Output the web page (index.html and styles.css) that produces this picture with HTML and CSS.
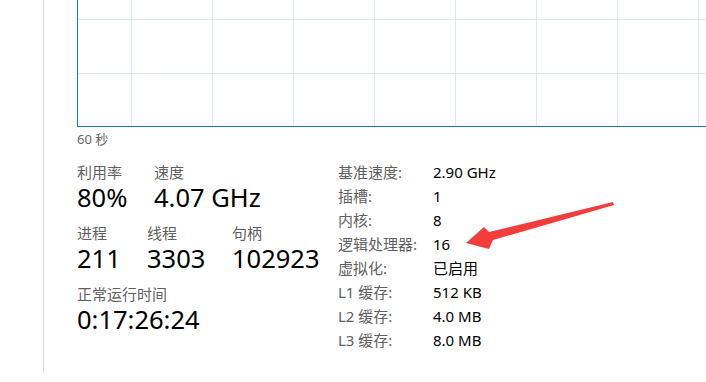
FILE: index.html
```html
<!DOCTYPE html>
<html lang="zh-CN">
<head>
  <meta charset="UTF-8" />
  <meta name="viewport" content="width=device-width, initial-scale=1" />
  <title>CPU 性能</title>
  <link rel="stylesheet" href="styles.css">
</head>
<body>
  <div class="panel">
    <div class="chart"></div>
    <div class="caption">60 秒</div>

    <div class="stats">
      <div class="live">
        <div class="row">
          <div class="cell w77">
            <div class="label">利用率</div>
            <div class="value">80%</div>
          </div>
          <div class="cell">
            <div class="label">速度</div>
            <div class="value">4.07 GHz</div>
          </div>
        </div>
        <div class="row">
          <div class="cell w70">
            <div class="label">进程</div>
            <div class="value">211</div>
          </div>
          <div class="cell w85">
            <div class="label">线程</div>
            <div class="value">3303</div>
          </div>
          <div class="cell">
            <div class="label">句柄</div>
            <div class="value">102923</div>
          </div>
        </div>
        <div class="row">
          <div class="cell">
            <div class="label">正常运行时间</div>
            <div class="value">0:17:26:24</div>
          </div>
        </div>
      </div>

      <dl class="specs">
        <dt>基准速度:</dt><dd>2.90 GHz</dd>
        <dt>插槽:</dt><dd>1</dd>
        <dt>内核:</dt><dd>8</dd>
        <dt>逻辑处理器:</dt><dd>16</dd>
        <dt>虚拟化:</dt><dd>已启用</dd>
        <dt>L1 缓存:</dt><dd>512 KB</dd>
        <dt>L2 缓存:</dt><dd>4.0 MB</dd>
        <dt>L3 缓存:</dt><dd>8.0 MB</dd>
      </dl>
    </div>
  </div>

  <svg class="arrow" width="160" height="56" viewBox="0 0 160 56">
    <polygon points="6,45 24,29 29,34 153,4 154,7 33,42 29,51" fill="#f23d3d" />
  </svg>
</body>
</html>
```

FILE: styles.css
```css
body {
  margin: 0;
  background: #fff;
  font-family: "Noto Sans", "Noto Sans CJK SC", sans-serif;
  color: #000;
  overflow: hidden;
}
.panel {
  margin-left: 43px;
  height: 373px;
  border-left: 1px solid #d9d9d9;
  padding-left: 33px;
}
.chart {
  height: 126px;
  border-left: 1px solid #1b7ab8;
  border-bottom: 1px solid #1b7ab8;
  background-image:
    linear-gradient(to right, #d9e8f2 0 1px, transparent 1px),
    linear-gradient(to bottom, #d9e8f2 0 1px, transparent 1px);
  background-size: 81px 100%, 100% 54px;
  background-position: 53px 0, 0 19px;
}
.caption {
  margin-top: 4px;
  font-size: 13px;
  line-height: 16px;
  color: #666;
}
.stats {
  display: grid;
  grid-template-columns: 261px 1fr;
  margin-top: 15px;
}
.row {
  display: flex;
  margin-bottom: 11px;
}
.cell.w77 { width: 77px; }
.cell.w70 { width: 70px; }
.cell.w85 { width: 85px; }
.label {
  font-size: 15px;
  line-height: 20px;
  color: #5f5f5f;
}
.value {
  font-size: 25.5px;
  line-height: 30px;
  color: #000;
}
.specs {
  display: grid;
  grid-template-columns: 95px 1fr;
  margin: -2px 0 0;
  font-size: 15px;
  line-height: 24px;
}
.specs dt {
  color: #5f5f5f;
}
.specs dd {
  margin: 0;
  color: #000;
}
.arrow {
  position: absolute;
  left: 460px;
  top: 198px;
}
```
